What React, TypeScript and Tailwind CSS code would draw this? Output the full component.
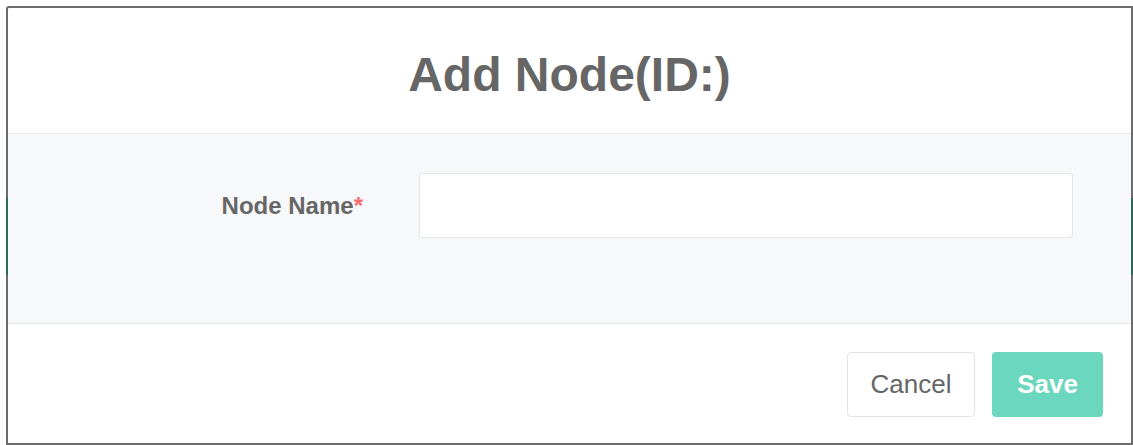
// 新增节点弹窗 — 节点名称表单，取消 / 保存。

const font = { fontFamily: '"Liberation Sans", Arial, sans-serif' };

function NodeForm() {
  return (
    <div className="flex items-center">
      <label className="w-[355px] shrink-0 text-right text-[24px] font-bold text-[#666]">
        Node Name<span className="text-[#f56c6c]">*</span>
      </label>
      <input
        type="text"
        className="ml-[56px] h-[65px] w-[654px] rounded-[3px] border border-[#e4e6e9] bg-white px-4 text-[22px] outline-none"
      />
    </div>
  );
}

export default function App() {
  return (
    <div className="min-h-[445px] bg-white pl-[6px] pt-[6px]" style={font}>
      <div className="relative flex h-[439px] flex-col rounded-tl-[3px] border-2 border-[#6c6c6c] bg-white">
        {/* 背景页面在边框处透出的绿色条 */}
        <div className="absolute -left-[2px] top-[190px] h-[77px] w-[2px] bg-[#2b6a58]" />
        <div className="absolute -right-[2px] top-[190px] h-[77px] w-[2px] bg-[#2b6a58]" />

        <div className="flex h-[126px] shrink-0 items-center justify-center border-b border-[#e6e8eb] pt-[8px]">
          <h2 className="text-[48px] font-bold text-[#666]">Add Node(ID:)</h2>
        </div>

        <div className="h-[189px] shrink-0 bg-[#f7f8fa] pt-[39px]">
          <NodeForm />
        </div>

        <div className="flex flex-1 items-start justify-end gap-[17px] border-t border-[#e6e8eb] pr-[28px] pt-[28px]">
          <button className="h-[65px] w-[128px] rounded-[4px] border border-[#e1e3e6] bg-white text-[26px] text-[#666]">
            Cancel
          </button>
          <button className="h-[65px] w-[111px] rounded-[4px] bg-[#6bd7be] text-[26px] font-bold text-white">
            Save
          </button>
        </div>
      </div>
    </div>
  );
}
